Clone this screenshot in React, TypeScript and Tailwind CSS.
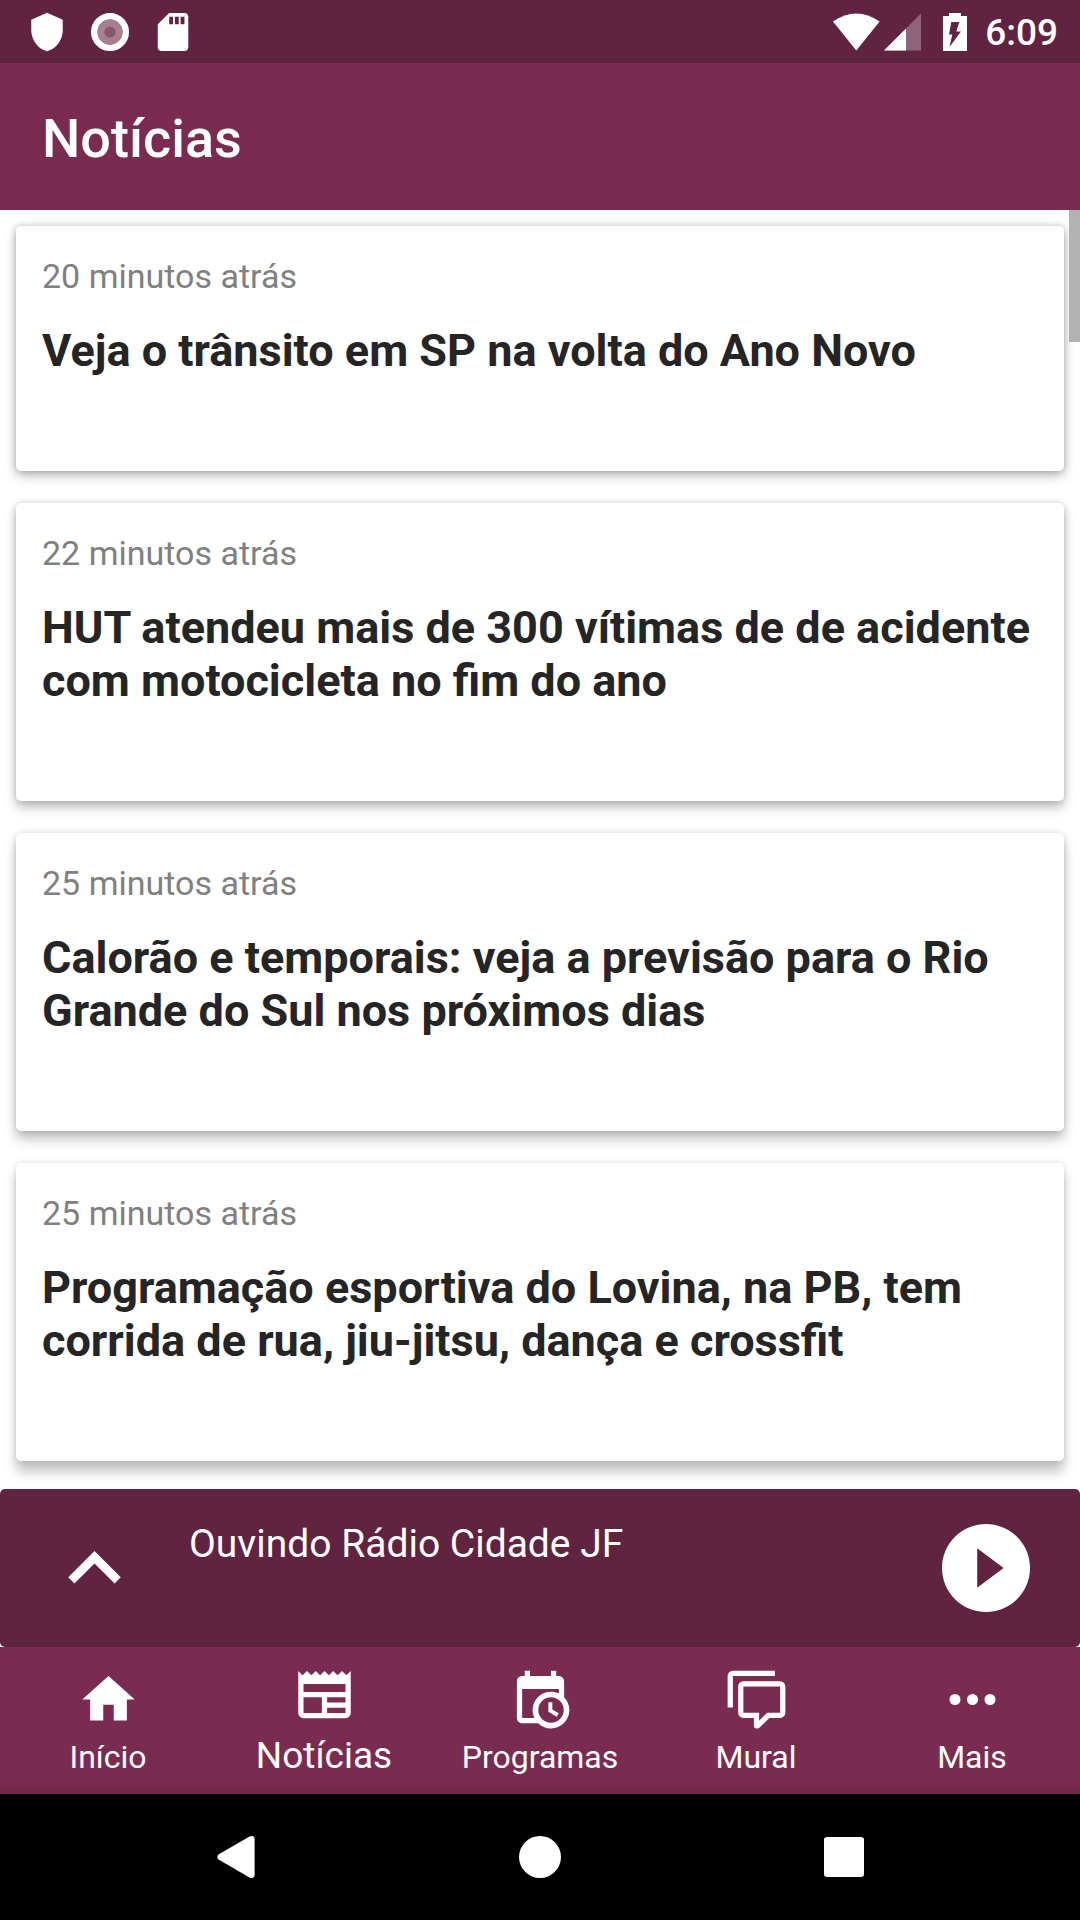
import React from "react";

type NewsItem = { time: string; title: string; shadow: string };

const news: NewsItem[] = [
  {
    time: "20 minutos atrás",
    title: "Veja o trânsito em SP na volta do Ano Novo",
    shadow: "shadow-[0_4px_12px_rgba(0,0,0,0.3),0_0_6px_rgba(0,0,0,0.16)]",
  },
  {
    time: "22 minutos atrás",
    title: "HUT atendeu mais de 300 vítimas de de acidente com motocicleta no fim do ano",
    shadow: "shadow-[0_6px_12px_rgba(0,0,0,0.27),0_0_6px_rgba(0,0,0,0.15)]",
  },
  {
    time: "25 minutos atrás",
    title: "Calorão e temporais: veja a previsão para o Rio Grande do Sul nos próximos dias",
    shadow: "shadow-[0_8px_12px_rgba(0,0,0,0.25),0_0_6px_rgba(0,0,0,0.14)]",
  },
  {
    time: "25 minutos atrás",
    title: "Programação esportiva do Lovina, na PB, tem corrida de rua, jiu-jitsu, dança e crossfit",
    shadow: "shadow-[0_11px_12px_rgba(0,0,0,0.23),0_0_6px_rgba(0,0,0,0.13)]",
  },
];

type Tab = { label: string; active?: boolean; icon: React.ReactNode };

const tabs: Tab[] = [
  { label: "Início", icon: <path d="M10 20v-6h4v6h5v-8h3L12 3 2 12h3v8z" /> },
  {
    label: "Notícias",
    active: true,
    icon: (
      <path d="M20,11H4V8H20M20,15H13V13H20M20,19H13V17H20M11,19H4V13H11M20.33,4.67L18.67,3L17,4.67L15.33,3L13.67,4.67L12,3L10.33,4.67L8.67,3L7,4.67L5.33,3L3.67,4.67L2,3V19A2,2 0 0,0 4,21H20A2,2 0 0,0 22,19V3L20.33,4.67Z" />
    ),
  },
  {
    label: "Programas",
    icon: (
      <path d="M15,13H16.5V15.82L18.94,17.23L18.19,18.53L15,16.69V13M19,8H5V19H9.67C9.24,18.09 9,17.07 9,16A7,7 0 0,1 16,9C17.07,9 18.09,9.24 19,9.67V8M5,21C3.89,21 3,20.1 3,19V5C3,3.89 3.89,3 5,3H6V1H8V3H16V1H18V3H19A2,2 0 0,1 21,5V11.1C22.24,12.36 23,14.09 23,16A7,7 0 0,1 16,23C14.09,23 12.36,22.24 11.1,21H5M16,11.15A4.85,4.85 0 0,0 11.15,16C11.15,18.68 13.32,20.85 16,20.85A4.85,4.85 0 0,0 20.85,16C20.85,13.32 18.68,11.15 16,11.15Z" />
    ),
  },
  {
    label: "Mural",
    icon: (
      <path d="M12,23A1,1 0 0,1 11,22V19H7A2,2 0 0,1 5,17V7A2,2 0 0,1 7,5H21A2,2 0 0,1 23,7V17A2,2 0 0,1 21,19H16.9L13.2,22.71C13,22.89 12.76,23 12.5,23H12M13,17V20.08L16.08,17H21V7H7V17H13M3,15H1V3A2,2 0 0,1 3,1H19V3H3V15Z" />
    ),
  },
  {
    label: "Mais",
    icon: (
      <>
        <circle cx="5.33" cy="12" r="2.1" />
        <circle cx="12" cy="12" r="2.1" />
        <circle cx="18.67" cy="12" r="2.1" />
      </>
    ),
  },
];

function StatusBar() {
  return (
    <div className="flex h-[63px] items-center justify-between bg-[#602340] pr-[22px] pl-[26px] text-white">
      <div className="flex items-center gap-[21px]">
        <svg className="size-[42px]" viewBox="0 0 24 24" fill="currentColor" aria-hidden="true">
          <path d="M12,1L3,5V11C3,16.55 6.84,21.74 12,23C17.16,21.74 21,16.55 21,11V5L12,1Z" />
        </svg>
        <svg className="size-[42px]" viewBox="0 0 42 42" fill="currentColor" aria-hidden="true">
          <circle cx="21" cy="21" r="15.7" fill="none" stroke="currentColor" strokeWidth="6.6" />
          <circle cx="21" cy="21" r="12.6" fill="#a67f91" />
          <circle cx="21" cy="21" r="5.6" fill="#86566d" />
        </svg>
        <svg className="size-[42px]" viewBox="1 1 22 22" fill="currentColor" aria-hidden="true">
          <path d="M18 2h-8L4.02 8 4 20c0 1.1.9 2 2 2h12c1.1 0 2-.9 2-2V4c0-1.1-.9-2-2-2zm-6 6h-2V4h2v4zm3 0h-2V4h2v4zm3 0h-2V4h2v4z" />
        </svg>
      </div>
      <div className="flex items-center">
        <svg className="h-[38px] w-[47px]" viewBox="0 0 47 38" fill="currentColor" aria-hidden="true">
          <path d="M0 8.5Q23.3 -7.5 46.6 8.5L23.3 37.5Z" />
        </svg>
        <svg className="ml-1 h-[38px] w-[37px]" viewBox="0 0 37 38" fill="currentColor" aria-hidden="true">
          <path d="M0 37.5L37 .5V37.5Z" opacity="0.3" />
          <path d="M0 37.5L22 15.5V37.5Z" />
        </svg>
        <svg className="ml-[22px] h-[38px] w-6" viewBox="0 0 24 38" fill="currentColor" aria-hidden="true">
          <path
            fillRule="evenodd"
            d="M6 0H18V3H24V38H0V3H6ZM8.3 9L6 21.5H9.3L6.5 34L18 18.5H13.3L16.3 9Z"
          />
        </svg>
        <span className="ml-[18px] pt-[3px] text-[37px] leading-[44px] font-medium">6:09</span>
      </div>
    </div>
  );
}

function NewsCard({ item }: { item: NewsItem }) {
  return (
    <article className={`rounded-[5px] bg-white px-[26px] pt-[30px] pb-[94px] ${item.shadow}`}>
      <p className="text-[34px] leading-10 text-[#808080]">{item.time}</p>
      <h2 className="mt-7 text-[45px] leading-[53px] font-bold text-[#252525]">{item.title}</h2>
    </article>
  );
}

function Player() {
  return (
    <section className="relative flex h-[158px] items-center rounded-[5px] bg-[#602340] px-[42px] text-white">
      <button type="button" aria-label="Expandir" className="shrink-0">
        <svg className="size-[105px]" viewBox="0 0 24 24" fill="currentColor" aria-hidden="true">
          <path d="M7.41,15.41L12,10.83L16.59,15.41L18,14L12,8L6,14L7.41,15.41Z" />
        </svg>
      </button>
      <p className="mt-8 ml-[42px] flex-1 self-start text-[39px] leading-[46px]">Ouvindo Rádio Cidade JF</p>
      <button type="button" aria-label="Tocar" className="shrink-0 p-2">
        <svg className="size-[88px]" viewBox="2 2 20 20" fill="currentColor" aria-hidden="true">
          <path d="M12 2C6.48 2 2 6.48 2 12s4.48 10 10 10 10-4.48 10-10S17.52 2 12 2zm-2 14.5v-9l6 4.5-6 4.5z" />
        </svg>
      </button>
    </section>
  );
}

function TabBar() {
  return (
    <nav className="grid h-[147px] grid-cols-5 bg-linear-to-b from-[#7a2c50] from-92% to-[#6a2746] text-white">
      {tabs.map((tab) => (
        <button
          key={tab.label}
          type="button"
          aria-current={tab.active ? "page" : undefined}
          className={`flex flex-col items-center ${tab.active ? "gap-2 pt-4" : "gap-[7px] pt-[21px]"}`}
        >
          <svg className="size-[63px]" viewBox="0 0 24 24" fill="currentColor" aria-hidden="true">
            {tab.icon}
          </svg>
          <span className={tab.active ? "text-[37px] leading-[44px]" : "text-[32px] leading-[38px]"}>{tab.label}</span>
        </button>
      ))}
    </nav>
  );
}

function SystemBar() {
  return (
    <div className="flex h-[126px] justify-center bg-black text-white">
      <button type="button" aria-label="Voltar" className="flex w-[304px] items-center justify-center">
        <svg className="h-[42px] w-[38px]" viewBox="0 0 38 42" fill="currentColor" aria-hidden="true">
          <path d="M1.5 18.6L32.5.6Q37.6-1.2 37.6 3.5V38.5Q37.6 43.2 32.5 41.4L1.5 23.4Q-1 21 1.5 18.6Z" />
        </svg>
      </button>
      <button type="button" aria-label="Tela inicial" className="flex w-[304px] items-center justify-center">
        <span className="size-[42px] rounded-full bg-white" />
      </button>
      <button type="button" aria-label="Recentes" className="flex w-[304px] items-center justify-center">
        <span className="size-10 rounded-[3px] bg-white" />
      </button>
    </div>
  );
}

export default function App() {
  return (
    <div className="flex min-h-screen flex-col bg-white font-[Roboto,sans-serif]">
      <StatusBar />
      <header className="flex h-[147px] items-center bg-[#7a2c50] px-[42px] pt-1">
        <h1 className="text-[54px] leading-[62px] font-medium text-white">Notícias</h1>
      </header>
      <main className="relative flex flex-1 flex-col gap-8 px-4 pt-4 pb-7">
        {news.map((item) => (
          <NewsCard key={item.title} item={item} />
        ))}
        <div className="absolute top-0 right-0 h-[132px] w-[11px] bg-[#b2b2b2]" />
      </main>
      <Player />
      <TabBar />
      <SystemBar />
    </div>
  );
}
